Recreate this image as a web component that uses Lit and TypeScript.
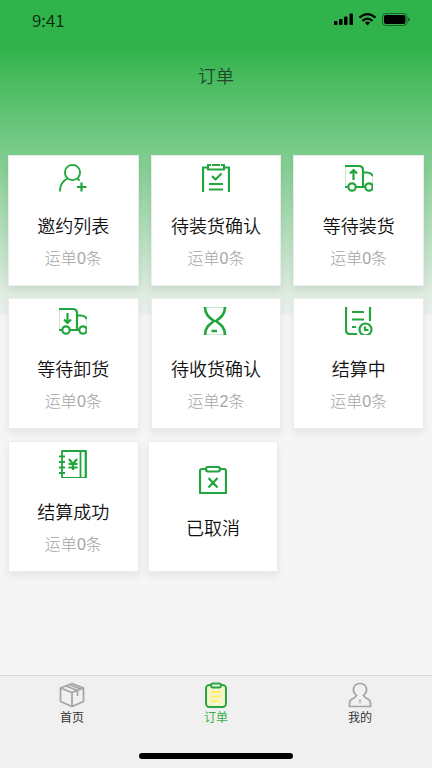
import { LitElement, html, svg, css, nothing } from "lit";
import { customElement } from "lit/decorators.js";
import { classMap } from "lit/directives/class-map.js";

interface OrderCard {
  title: string;
  count?: number;
  icon: unknown;
}

const truck = (arrow: unknown) => svg`
  <path d="M0 2H13.500Q18 2 18 6V22.500M18 8.500H22Q26 8.500 28 12M0 23H3M11 23H20"/>
  ${arrow}
  <circle cx="7" cy="23" r="3.700"/><circle cx="24" cy="23" r="3.700"/>
  <path class="faint" d="M.5 2V24M27.500 12V24"/>`;

const icons = {
  invite: svg`<g class="thin"><circle cx="13.500" cy="8.500" r="7.600"/>
    <path d="M8.500 14.500C3.500 17 1 21 .8 27.500M18.500 14.500L20.500 16.500"/></g>
    <path d="M22.500 18.500V27.500M18 23H27.500"/>`,
  confirm: svg`<path d="M1 28V3.500H6M22 3.500H27V28M9 1H6V5.500H22V1H19M10 .8H18M10 12L13.500 15.500L19.500 9.500M7 20H21M7 25.500H21"/>`,
  load: truck(svg`<path d="M8.500 16V6M5 9.500L8.500 6L12 9.500"/>`),
  unload: truck(svg`<path d="M8.500 6V16M5 12.500L8.500 16L12 12.500"/>`),
  glass: svg`<path class="bold" d="M3 0C3 8 8 11 12 14C8 17 3 20 3 28M23 0C23 8 18 11 14 14C18 17 23 20 23 28M9.500 24H15"/>
    <path class="faint" d="M1 .5H25M1 27.500H25"/>`,
  settling: svg`<path d="M1 0V23Q1 27 5 27H12M25 0V14M7 5H19M7 12.500H19M7 20H11"/>
    <circle cx="20.500" cy="22.500" r="6"/><path d="M20 19.500V23H23.500"/>`,
  settled: svg`<g class="thin"><path d="M3 1H27V28H3ZM21.500 1V28M26.500 1V28"/></g>
    <path d="M0 6.500H6M0 12H6M0 17.500H6M0 23H6M10 9L14 14L18 9M14 14V20M9.500 14H18.500M9.500 17.500H18.500"/>`,
  cancelled: svg`<path d="M7 3H3Q1 3 1 5V27H27V5Q27 3 25 3H21M9 1H19Q21 1 21 3Q21 5.500 19 5.500H9Q7 5.500 7 3Q7 1 9 1ZM9.500 12L18.500 21.500M18.500 12L9.500 21.500"/>`,
};

const rows: OrderCard[][] = [
  [
    { title: "邀约列表", count: 0, icon: icons.invite },
    { title: "待装货确认", count: 0, icon: icons.confirm },
    { title: "等待装货", count: 0, icon: icons.load },
  ],
  [
    { title: "等待卸货", count: 0, icon: icons.unload },
    { title: "待收货确认", count: 2, icon: icons.glass },
    { title: "结算中", count: 0, icon: icons.settling },
  ],
  [
    { title: "结算成功", count: 0, icon: icons.settled },
    { title: "已取消", icon: icons.cancelled },
  ],
];

const tabs = [
  {
    label: "首页",
    active: false,
    icon: svg`<path d="M13 1.500L24.500 6V19.500L13 24.500L1.500 19.500V6ZM1.500 6L13 10.500L24.500 6M13 10.500V24.500M7 4L18.500 8.500V14M10 2.500L21.500 7"/>`,
  },
  {
    label: "订单",
    active: true,
    icon: svg`<rect x="3" y="3" width="20" height="22" rx="3.500"/>
      <path class="notes" d="M8 10H18M8 14.500H18M8 19H15"/>
      <rect class="clip" x="8" y="1.500" width="10" height="4" rx="2"/>`,
  },
  {
    label: "我的",
    active: false,
    icon: svg`<path d="M9.500 13.500C4 9 6.500 1.500 13 1.500S22 9 16.500 13.500Q17 15 20 16.500Q23.500 18 23.500 21.500V24.500H2.500V21.500Q2.500 18 6 16.500Q9 15 9.500 13.500Z"/><path class="tie" d="M13 17V21.500"/>`,
  },
];

@customElement("order-card")
export class OrderCardElement extends LitElement {
  static properties = { card: { attribute: false } };
  declare card: OrderCard;

  static styles = css`
    :host {
      display: block;
    }
    .card {
      display: flex;
      flex-direction: column;
      align-items: center;
      justify-content: center;
      width: 100%;
      min-height: 131px;
      padding: 0 0 5px;
      border: 1px solid #eaeeea;
      background: #fff;
      box-shadow: 0 4px 8px rgba(0, 0, 0, 0.07);
      font: inherit;
      cursor: pointer;
    }
    .icon {
      width: 28px;
      height: 28px;
      fill: none;
      stroke: #21a53c;
      stroke-width: 2.2;
      stroke-linecap: butt;
      stroke-linejoin: round;
    }
    .thin {
      stroke-width: 1.8;
    }
    .bold {
      stroke-width: 2.6;
    }
    .faint {
      stroke-width: 1;
      opacity: 0.25;
    }
    .title {
      margin-top: 21px;
      font-size: 18px;
      font-weight: 350;
      line-height: 28px;
      color: #111;
    }
    .count {
      margin-top: 4px;
      font-size: 16px;
      font-weight: 300;
      line-height: 28px;
      color: #a6a6a6;
    }
  `;

  render() {
    const { title, count, icon } = this.card;
    return html`<button class="card" type="button">
      <svg class="icon" viewBox="0 0 28 28" aria-hidden="true">${icon}</svg>
      <span class="title">${title}</span>
      ${count === undefined ? nothing : html`<span class="count">运单${count}条</span>`}
    </button>`;
  }
}

@customElement("app-root")
export class AppRoot extends LitElement {
  static styles = css`
    :host {
      display: flex;
      flex-direction: column;
      min-height: 100vh;
      background: #f5f5f5 linear-gradient(#30b34a 45px, #edf0ed 315px) no-repeat top / 100% 315px;
      font-family: "Liberation Sans", "Noto Sans CJK SC", sans-serif;
    }
    .status {
      display: flex;
      align-items: center;
      justify-content: space-between;
      height: 40px;
      padding: 0 22px 0 32px;
    }
    .time {
      font-family: "Noto Sans CJK SC", sans-serif;
      font-size: 17px;
      font-weight: 350;
      line-height: 40px;
      color: #06280d;
    }
    .device {
      width: 77px;
      height: 14px;
    }
    .heading {
      margin: 23px 0 0;
      font-size: 18px;
      font-weight: 350;
      line-height: 28px;
      text-align: center;
      color: #23492c;
    }
    .orders {
      display: flex;
      flex: 1;
      flex-direction: column;
      gap: 12px;
      padding: 64px 8px 24px;
    }
    .row {
      display: flex;
      gap: 12px;
    }
    .row.last {
      gap: 9px;
    }
    .cell {
      flex: 0 0 calc((100% - 24px) / 3);
    }
    .footer {
      display: flex;
      flex-direction: column;
      align-items: center;
      gap: 27px;
      padding-bottom: 9px;
      border-top: 1px solid #d5d5d5;
      background: #f0f0f0;
    }
    .tabs {
      display: flex;
      width: 100%;
    }
    .tab {
      display: flex;
      flex: 1;
      flex-direction: column;
      align-items: center;
      padding-top: 6px;
      font-size: 12px;
      line-height: 16px;
      color: #333;
      text-decoration: none;
    }
    .tab-icon {
      width: 26px;
      height: 26px;
      margin-bottom: 2px;
      fill: none;
      stroke: #a3a3a3;
      stroke-width: 1.7;
      stroke-linejoin: round;
    }
    .tab.active {
      color: #35ae4d;
    }
    .active .tab-icon {
      fill: #f5f5cd;
      stroke: #2aa645;
      stroke-width: 2;
    }
    .active .notes {
      stroke: #fff06a;
    }
    .clip {
      fill: #f0f0f0;
    }
    .tie {
      stroke-width: 1.2;
    }
    .home {
      width: 154px;
      height: 6px;
      border-radius: 3px;
      background: #000;
    }
  `;

  render() {
    return html`
      <div class="status">
        <span class="time">9:41</span>
        <svg class="device" viewBox="0 0 77 14" role="img" aria-label="信号、无线网络、电量">
          <rect x="1" y="8" width="3.500" height="4" rx="1" />
          <rect x="6" y="6" width="3.500" height="6" rx="1" />
          <rect x="11" y="3.500" width="3.500" height="8.500" rx="1" />
          <rect x="16.500" y=".5" width="3.500" height="11.500" rx="1" />
          <g fill="none" stroke="#000" stroke-width="2.200">
            <path d="M26.500 4.700Q34.500 -2.300 42.500 4.700" />
            <path d="M29.500 7.900Q34.500 3.500 39.500 7.900" />
          </g>
          <path d="M31.800 9.600Q34.500 7.600 37.200 9.600L34.500 12.400Z" />
          <rect x="49.500" y=".5" width="24.500" height="12" rx="3.500" fill="none" stroke="#000" stroke-opacity=".45" />
          <rect x="51" y="2" width="21.500" height="9" rx="2" />
          <path d="M75 4.500Q77 5 77 6.500T75 8.500Z" fill-opacity=".45" />
        </svg>
      </div>
      <h1 class="heading">订单</h1>
      <main class="orders">
        ${rows.map(
          (row, i) => html`<div class=${classMap({ row: true, last: i === rows.length - 1 })}>
            ${row.map((card) => html`<order-card class="cell" .card=${card}></order-card>`)}
          </div>`
        )}
      </main>
      <footer class="footer">
        <nav class="tabs">
          ${tabs.map(
            (tab) => html`<a class=${classMap({ tab: true, active: tab.active })} href="#">
              <svg class="tab-icon" viewBox="0 0 26 26" aria-hidden="true">${tab.icon}</svg>
              ${tab.label}
            </a>`
          )}
        </nav>
        <div class="home"></div>
      </footer>
    `;
  }
}
